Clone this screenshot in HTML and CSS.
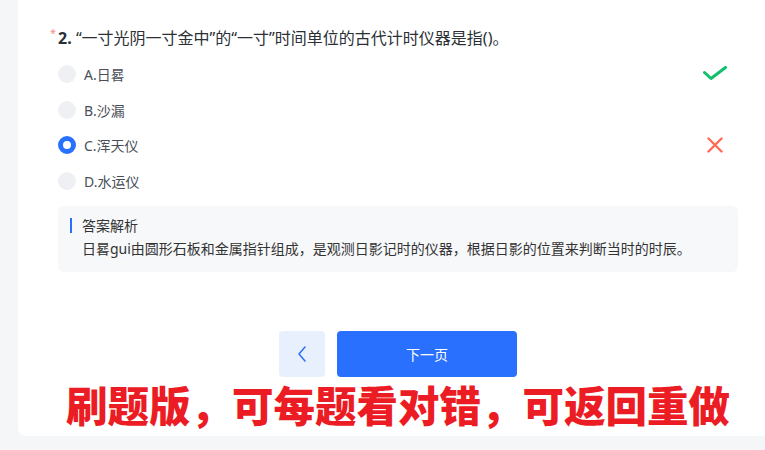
FILE: index.html
```html
<!DOCTYPE html>
<html lang="zh-CN">
<head>
  <meta charset="UTF-8" />
  <meta name="viewport" content="width=device-width, initial-scale=1.0"/>
  <title>刷题</title>
  <link rel="stylesheet" href="styles.css">
</head>
<body>
  <div class="card">
    <div class="question">
      <span class="required">*</span><b>2.</b> “一寸光阴一寸金中”的“一寸”时间单位的古代计时仪器是指()。
    </div>

    <div class="options">
      <div class="option">
        <span class="radio"></span>
        <span class="label">A.日晷</span>
        <svg class="mark" width="24" height="16" viewBox="0 0 24 16">
          <polyline points="1.5,6.5 8,12.5 22.5,1.5" fill="none" stroke="#12bf6b" stroke-width="3" stroke-linecap="round" stroke-linejoin="round"/>
        </svg>
      </div>
      <div class="option">
        <span class="radio"></span>
        <span class="label">B.沙漏</span>
      </div>
      <div class="option">
        <span class="radio checked"></span>
        <span class="label">C.浑天仪</span>
        <svg class="mark" width="24" height="16" viewBox="0 0 24 16">
          <path d="M5.5 1.5 L18.5 14.5 M18.5 1.5 L5.5 14.5" fill="none" stroke="#ff6a55" stroke-width="2.4" stroke-linecap="round"/>
        </svg>
      </div>
      <div class="option">
        <span class="radio"></span>
        <span class="label">D.水运仪</span>
      </div>
    </div>

    <div class="analysis">
      <div class="analysis-title">答案解析</div>
      <div class="analysis-body">日晷gui由圆形石板和金属指针组成，是观测日影记时的仪器，根据日影的位置来判断当时的时辰。</div>
    </div>

    <div class="actions">
      <button class="btn-prev">
        <svg width="10" height="16" viewBox="0 0 10 16">
          <polyline points="8,1 2,8 8,15" fill="none" stroke="#2970ff" stroke-width="1.5" stroke-linecap="round" stroke-linejoin="round"/>
        </svg>
      </button>
      <button class="btn-next">下一页</button>
    </div>

    <div class="banner">刷题版，可每题看对错，可返回重做</div>
  </div>
</body>
</html>
```

FILE: styles.css
```css
body {
  margin: 0;
  padding: 0;
  background-color: #f5f6f8;
  font-family: "Noto Sans", "Noto Sans CJK SC", sans-serif;
  height: 450px;
  overflow: hidden;
}

.card {
  margin-left: 18px;
  width: 760px;
  background: white;
  border-radius: 0 0 8px 8px;
  padding: 27px 40px 0;
  box-sizing: border-box;
}

.question {
  font-size: 16px;
  line-height: 22px;
  color: #2b2f36;
}

.question b {
  font-weight: 700;
}

.required {
  color: #f98b85;
  font-size: 11px;
  margin-left: -8px;
  margin-right: 2px;
  vertical-align: top;
  line-height: 12px;
}

.options {
  margin-top: 7px;
}

.option {
  display: flex;
  align-items: center;
  height: 35.7px;
  padding-right: 11px;
}

.radio {
  width: 18px;
  height: 18px;
  border-radius: 50%;
  background: #eef0f4;
  box-sizing: border-box;
}

.radio.checked {
  background: white;
  border: 5px solid #2970ff;
}

.label {
  margin-left: 8px;
  font-size: 14px;
  color: #4a4f57;
  flex: 1;
}

.analysis {
  margin-top: 7px;
  background: #f7f8fa;
  border-radius: 6px;
  padding: 12px 12px 13px;
}

.analysis-title {
  font-size: 14px;
  line-height: 16px;
  color: #333;
  padding-left: 10px;
  border-left: 2px solid #2970ff;
  height: 15px;
}

.analysis-body {
  margin-top: 6px;
  padding-left: 12px;
  font-size: 14px;
  line-height: 20px;
  color: #333;
}

.actions {
  display: flex;
  justify-content: center;
  gap: 12px;
  margin-top: 59px;
}

.actions button {
  height: 46px;
  border: none;
  border-radius: 4px;
  font-family: inherit;
  cursor: pointer;
}

.btn-prev {
  width: 46px;
  background: #e8f0fe;
  display: flex;
  justify-content: center;
  align-items: center;
}

.btn-next {
  width: 180px;
  background: #2970ff;
  color: white;
  font-size: 14px;
}

.banner {
  text-align: center;
  font-size: 41.5px;
  line-height: 59px;
  font-weight: 900;
  color: #ec1c24;
  white-space: nowrap;
}
```
